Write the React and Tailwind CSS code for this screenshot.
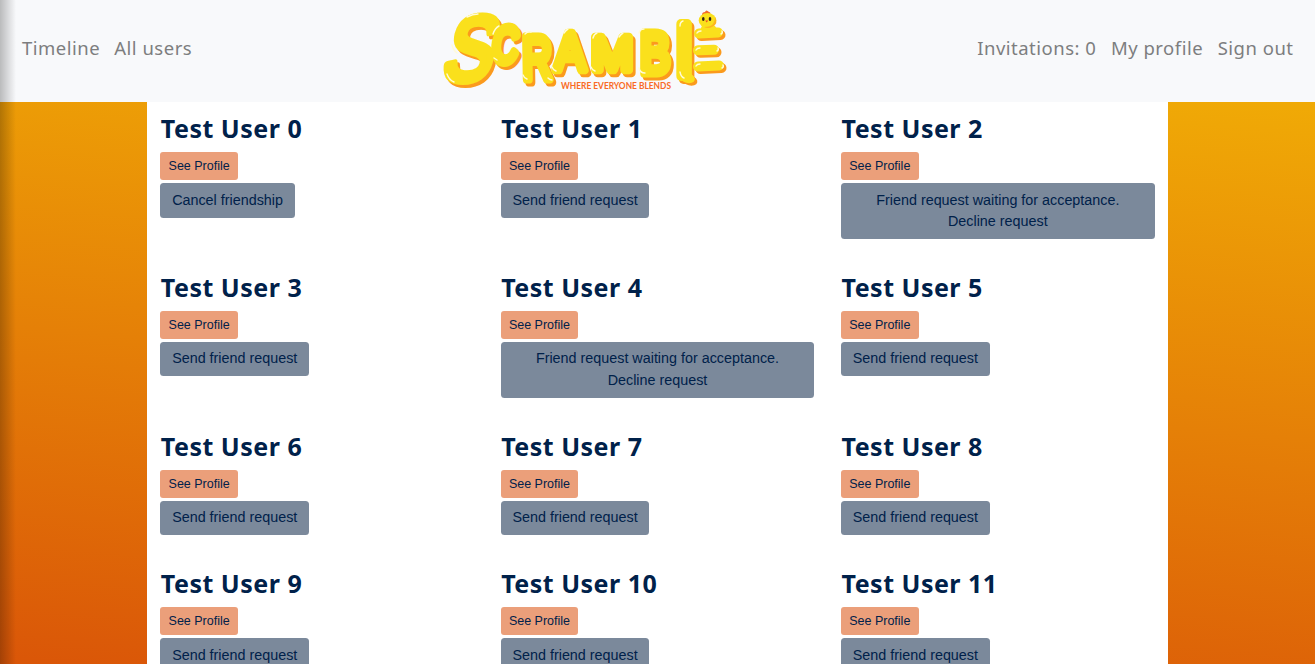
const letters = [
  { c: 'S', x: 464, y: 80, size: 91, sx: 0.8, skew: -15, w: 8 },
  { c: 'C', x: 504, y: 62, size: 50, sx: 0.7, skew: -6, w: 9 },
  { c: 'R', x: 537.5, y: 79, size: 61, sx: 0.68, skew: 1, w: 9 },
  { c: 'A', x: 570, y: 70, size: 53, sx: 0.86, skew: 0, w: 8.5 },
  { c: 'M', x: 612, y: 70, size: 49, sx: 1.02, skew: 0, w: 8.5 },
  { c: 'B', x: 655, y: 73, size: 58, sx: 0.78, skew: 0, w: 9 },
  { c: 'l', x: 684, y: 76, size: 72, sx: 0.95, skew: 0, w: 10 },
];

function Lettering({ color }) {
  return letters.map((l) => (
    <text
      key={l.c}
      transform={`translate(${l.x} ${l.y}) skewX(${l.skew}) scale(${l.sx} 1)`}
      fontSize={l.size}
      fontFamily="Liberation Sans, sans-serif"
      textAnchor="middle"
      fill={color}
      stroke={color}
      strokeWidth={l.w}
      strokeLinejoin="round"
    >
      {l.c}
    </text>
  ));
}

function Pills({ color }) {
  return (
    <g fill={color}>
      <ellipse cx="687.5" cy="78" rx="7.5" ry="5" transform="rotate(15 687.5 78)" />
      <rect x="694" y="28" width="29" height="10" rx="5" transform="rotate(-3 708 33)" />
      <rect x="701" y="25" width="15" height="10" rx="4" />
      <rect x="693" y="45" width="26" height="10" rx="5" transform="rotate(-2 706 50)" />
      <rect x="693" y="61" width="31" height="10" rx="5" transform="rotate(-3 708 66)" />
    </g>
  );
}

function Logo() {
  return (
    <svg width="290" height="90" viewBox="440 5 290 90" className="block overflow-visible">
      <g transform="translate(2.5 2.5)">
        <Lettering color="#fb9a1d" />
        <Pills color="#fb9a1d" />
      </g>
      <Lettering color="#fae01c" />
      <Pills color="#fae01c" />
      <g fill="none" stroke="#fffbd8" strokeWidth="1.4" strokeLinecap="round">
        <path d="M467 17q6-3 11-3M452 45q1 5 5 8M447 74q2 6 7 8M493 34q2-6 6-8M494 58l3 2M525 34q3-3 6-2M523 75q1 3 4 4M548 78q2 2 4 2M564 33q2-3 4-4M552 67q1 3 4 4M591 67q1 3 4 4M593 38q1-4 4-5M619 37q2-3 4-4M639 33q1-4 5-4M639 68q1 5 6 5M680 26q0-4 3-5M680 72q1 5 4 6" />
        <path d="M697 33q1-2 4-2M696 50q1-2 4-2M696 66q1-2 4-2M721 34q2-1 1-3M717 51q2-1 1-3M722 68q2-1 1-3" />
      </g>
      <path d="M702 15q0-3 3-3q1-3 4 0q2 0 1 3z" fill="#f26a2a" />
      <ellipse cx="707.5" cy="20.5" rx="8.8" ry="7.5" fill="#fae01c" />
      <path d="M715 17q4 7-3 10q-4 2-8 0q7 0 9-3q2-3 2-7" fill="#fdb51c" />
      <ellipse cx="703.3" cy="19" rx="1.3" ry="2" fill="#332319" />
      <ellipse cx="710" cy="19" rx="1.3" ry="2" fill="#332319" />
      <path d="M705.2 20.5h3l-1.5 2z" fill="#f04e23" />
      <text x="561" y="88.5" fontSize="9.3" fontWeight="700" fontFamily="Lato, sans-serif" fill="#f96a24" textLength="110" lengthAdjust="spacingAndGlyphs">
        WHERE EVERYONE BLENDS
      </text>
    </svg>
  );
}

const SEND = 'Send friend request';
const PENDING = 'Friend request waiting for acceptance. Decline request';
const actions = ['Cancel friendship', SEND, PENDING, SEND, PENDING, SEND, SEND, SEND, SEND, SEND, SEND, SEND];

function UserCard({ index, action }) {
  return (
    <div className="flex flex-col items-start px-[13.33px] pb-[22px] pt-[11px]">
      <h2 className="h-[39px] whitespace-nowrap pl-[0.5px] font-['Noto_Sans',sans-serif] text-[25px] font-bold leading-[30px] tracking-[0.5px]">
        Test User {index}
      </h2>
      <button className="h-7 w-[77.6px] rounded-[3px] bg-[#eb9f7a] text-[12.5px] leading-[18px]">See Profile</button>
      <button className="mt-[3px] rounded-[3.5px] bg-[#7b899b] px-[11.8px] py-[6.7px] text-[14.35px] leading-[21.2px]">
        {action}
      </button>
    </div>
  );
}

export default function App() {
  return (
    <div className="relative flex h-[664px] flex-col overflow-hidden font-['Liberation_Sans',sans-serif] text-[#00214a]">
      <header className="grid h-[102px] shrink-0 grid-cols-[440px_290px_1fr] bg-[#f8f9fb] font-['Noto_Sans',sans-serif] text-[18.5px] leading-[26px] tracking-[0.5px] text-[#7d7e7f]">
        <nav className="flex gap-[14px] pl-[22px] pt-[35px]">
          <a className="whitespace-nowrap">Timeline</a>
          <a className="whitespace-nowrap">All users</a>
        </nav>
        <div className="pt-[5px] tracking-normal">
          <Logo />
        </div>
        <nav className="flex justify-end gap-[14.5px] pr-[21.5px] pt-[35px]">
          <a className="whitespace-nowrap">Invitations: 0</a>
          <a className="whitespace-nowrap">My profile</a>
          <a className="whitespace-nowrap">Sign out</a>
        </nav>
      </header>
      <div className="flex h-[562px] justify-center bg-[linear-gradient(185deg,#f0aa06,#da5608)]">
        <main className="grid w-[1021px] grid-cols-3 content-start overflow-hidden bg-white">
          {actions.map((action, i) => (
            <UserCard key={i} index={i} action={action} />
          ))}
        </main>
      </div>
      <div className="pointer-events-none absolute inset-y-0 left-0 w-4 bg-linear-to-r from-black/25 to-transparent" />
    </div>
  );
}
